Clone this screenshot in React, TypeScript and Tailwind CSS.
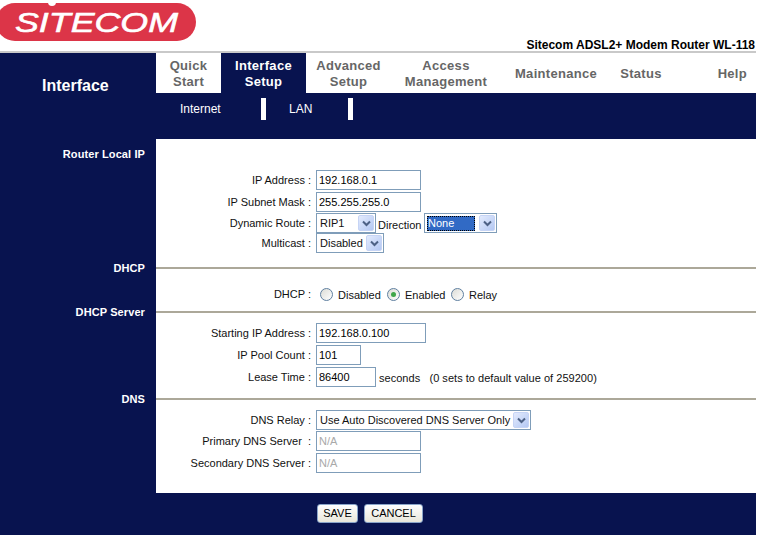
import { ReactNode } from 'react';

const NAVY = 'bg-[#08134f]';

function Chevron() {
  return (
    <svg width="9" height="7" viewBox="0 0 9 7" fill="none">
      <path d="M1 1.5 L4.5 5 L8 1.5" stroke="#4d6185" strokeWidth="2" />
    </svg>
  );
}

function Select({ value, width, active }: { value: string; width: string; active?: boolean }) {
  return (
    <div className={`flex h-[20px] items-center border border-[#7f9db9] bg-white p-px ${width}`}>
      {active ? (
        <span className="mx-px flex h-[15px] flex-1 items-center border border-dotted border-black bg-[#316ac5] text-white">{value}</span>
      ) : (
        <span className="flex-1 whitespace-nowrap pl-[2px]">{value}</span>
      )}
      <span className="ml-[3px] flex h-[16px] w-[16px] items-center justify-center rounded-[2px] border border-[#c6d4f5] bg-gradient-to-br from-[#e3ebfd] to-[#b4c8f3]">
        <Chevron />
      </span>
    </div>
  );
}

function Input({ value, width, disabled }: { value: string; width: string; disabled?: boolean }) {
  return (
    <input
      readOnly
      value={value}
      className={`h-[20px] border border-[#7f9db9] bg-white px-[2px] outline-none ${width} ${disabled ? 'text-[#a9a9a9]' : 'text-black'}`}
    />
  );
}

function Radio({ label, checked, width }: { label: string; checked?: boolean; width: string }) {
  return (
    <span className={`flex items-center ${width}`}>
      <span className="flex h-[13px] w-[13px] items-center justify-center rounded-full border border-[#5f7fa0] bg-gradient-to-br from-[#dcdcd6] to-white">
        {checked && <span className="h-[5px] w-[5px] rounded-full bg-[#3fa64a]" />}
      </span>
      <span className="ml-[5px] mt-[2px]">{label}</span>
    </span>
  );
}

function Row({ label, top, children }: { label: string; top: string; children: ReactNode }) {
  return (
    <div className={`flex items-start ${top}`}>
      <div className="w-[155px] shrink-0 whitespace-pre pt-[3px] text-right leading-[14px]">{label}</div>
      <div className="ml-[5px] flex items-start">{children}</div>
    </div>
  );
}

function Heading({ label, line = true }: { label: string; line?: boolean }) {
  return (
    <div className="flex h-[14px]">
      <div className="w-[156px] shrink-0 pr-[11px] text-right text-[11px] font-bold leading-[14px] tracking-[0.1px] text-white">{label}</div>
      <div className="flex flex-1 items-center bg-white">
        {line && <div className="h-[2px] w-full bg-[#aca899]" />}
      </div>
    </div>
  );
}

function Body({ height, children }: { height: string; children: ReactNode }) {
  return <div className={`ml-[156px] bg-white ${height}`}>{children}</div>;
}

const tabs = [
  { label: ['Quick', 'Start'], w: 'w-[65px]' },
  { label: ['Interface', 'Setup'], w: 'w-[85px]', active: true },
  { label: ['Advanced', 'Setup'], w: 'w-[85px]' },
  { label: ['Access', 'Management'], w: 'w-[110px]' },
  { label: ['Maintenance'], w: 'w-[110px]' },
  { label: ['Status'], w: 'w-[60px]' },
];

export default function App() {
  return (
    <div className="w-[756px] font-['Liberation_Sans',Arial,sans-serif] text-[11px] text-[#111]">
      <header className="flex h-[51px] justify-between">
        <svg width="197" height="44" viewBox="0 0 197 44" className="shrink-0">
          <rect x="-4" y="3" width="200" height="38" rx="19" fill="#dc3548" />
          <circle cx="52" cy="2" r="4" fill="#fff" />
          <text x="15" y="32" fontFamily="Liberation Sans" fontStyle="italic" fontSize="28" fill="#fff" stroke="#fff" strokeWidth="0.6" textLength="163" lengthAdjust="spacingAndGlyphs">
            SITECOM
          </text>
        </svg>
        <div className="self-end whitespace-nowrap pr-px text-[12px] font-bold leading-[12px] text-black">Sitecom ADSL2+ Modem Router WL-118</div>
      </header>
      <div className="h-[2px] bg-[#c9c9c9]" />

      <main className={NAVY}>
        <nav className="flex h-[40px]">
          <div className="w-[156px] shrink-0 pl-[42px] pt-[25px] text-[16px] font-bold leading-[16px] text-white">Interface</div>
          <div className="flex flex-1 bg-white text-[13px] font-bold leading-[16px] tracking-[0.3px] text-[#666]">
            {tabs.map((t) => (
              <div key={t.label[0]} className={`flex flex-col items-center justify-center pt-px ${t.w} ${t.active ? `${NAVY} text-white` : ''}`}>
                {t.label.map((l) => (
                  <span key={l}>{l}</span>
                ))}
              </div>
            ))}
            <div className="flex flex-1 items-center justify-end pr-[9px] pt-px">Help</div>
          </div>
        </nav>

        <div className="flex h-[46px] pl-[180px] pt-[5px] text-[12px] text-white">
          <span className="w-[81px] pt-[3px] leading-[16px]">Internet</span>
          <span className="h-[22px] w-[5px] bg-white" />
          <span className="ml-[23px] w-[59px] pt-[3px] leading-[16px]">LAN</span>
          <span className="h-[22px] w-[5px] bg-white" />
        </div>

        <Body height="h-[8px]">{null}</Body>
        <Heading label="Router Local IP" line={false} />
        <Body height="h-[100px] pt-[9px]">
          <Row label="IP Address :" top="">
            <Input value="192.168.0.1" width="w-[105px]" />
          </Row>
          <Row label="IP Subnet Mask :" top="mt-[2px]">
            <Input value="255.255.255.0" width="w-[105px]" />
          </Row>
          <Row label="Dynamic Route :" top="mt-px">
            <Select value="RIP1" width="w-[60px]" />
            <span className="ml-[2px] mt-[4px] w-[46px] leading-[16px]">Direction</span>
            <Select value="None" width="w-[73px]" active />
          </Row>
          <Row label="Multicast :" top="">
            <Select value="Disabled" width="w-[68px]" />
          </Row>
        </Body>

        <Heading label="DHCP" />
        <Body height="h-[30px] pt-[9px]">
          <Row label="DHCP :" top="">
            <div className="ml-[4px] flex pt-px">
              <Radio label="Disabled" width="w-[67px]" />
              <Radio label="Enabled" checked width="w-[64px]" />
              <Radio label="Relay" width="w-[50px]" />
            </div>
          </Row>
        </Body>

        <Heading label="DHCP Server" />
        <Body height="h-[73px] pt-[4px]">
          <Row label="Starting IP Address :" top="">
            <Input value="192.168.0.100" width="w-[110px]" />
          </Row>
          <Row label="IP Pool Count :" top="mt-[2px]">
            <Input value="101" width="w-[45px]" />
          </Row>
          <Row label="Lease Time :" top="mt-[2px]">
            <Input value="86400" width="w-[60px]" />
            <span className="ml-[3px] mt-[4px] whitespace-pre leading-[14px] tracking-[0.03px]">seconds   (0 sets to default value of 259200)</span>
          </Row>
        </Body>

        <Heading label="DNS" />
        <Body height="h-[87px] pt-[4px]">
          <Row label="DNS Relay :" top="">
            <Select value="Use Auto Discovered DNS Server Only" width="w-[215px]" />
          </Row>
          <Row label="Primary DNS Server  :" top="mt-px">
            <Input value="N/A" width="w-[105px]" disabled />
          </Row>
          <Row label="Secondary DNS Server :" top="mt-[2px]">
            <Input value="N/A" width="w-[105px]" disabled />
          </Row>
        </Body>

        <footer className="flex h-[42px] gap-[6px] pl-[317px] pt-[11px]">
          <button className="h-[19px] w-[41px] rounded-[3px] border border-[#8aa5c9] bg-gradient-to-b from-white to-[#e8e6da] text-black">SAVE</button>
          <button className="h-[19px] w-[59px] rounded-[3px] border border-[#8aa5c9] bg-gradient-to-b from-white to-[#e8e6da] text-black">CANCEL</button>
        </footer>
      </main>
    </div>
  );
}
